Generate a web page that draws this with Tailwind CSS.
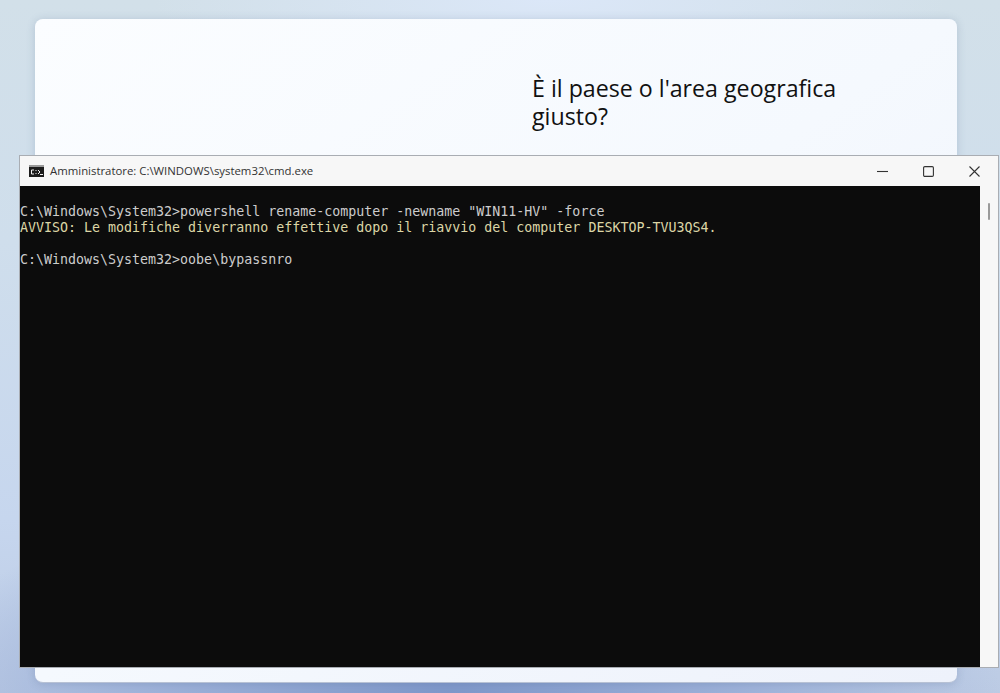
<!DOCTYPE html>
<html lang="en">
<head>
    <meta charset="UTF-8" />
    <title>cmd.exe</title>
    <script src="https://cdn.jsdelivr.net/npm/@tailwindcss/browser@4"></script>
</head>
<body class="relative h-[693px] w-[1000px] overflow-hidden bg-[radial-gradient(ellipse_55%_30%_at_45%_100%,#7f98ca_0%,#9fb3da_55%,transparent_100%),radial-gradient(ellipse_40%_12%_at_55%_0%,#dbe7f8_0%,transparent_100%),linear-gradient(180deg,#d2e0e9_0%,#cfdeec_35%,#c6d6ee_75%,#bccbe4_100%)]">
    <!-- setup card behind the console -->
    <div class="ml-[35px] mt-[19px] h-[664px] w-[922px] rounded-lg border-b border-[#b7c1d4] bg-gradient-to-br from-[#fbfdff] via-[#f5f9fe] to-[#eef2fb] pl-[497px] pt-[55px] shadow-[0_1px_8px_rgba(70,90,130,0.22)]">
        <h1 class="w-[340px] text-[23.2px] leading-[28px] font-medium text-[#111] [font-family:'Open_Sans','Noto_Sans',sans-serif]">È il paese o l'area geografica giusto?</h1>
    </div>

    <!-- console window -->
    <div class="absolute left-[19px] top-[155px] flex h-[513px] w-[980px] flex-col border border-[#a9adb3] bg-[#f7f7f7]">
        <div class="flex h-[30px] shrink-0 items-center pl-[9px] text-[#333]">
            <svg width="15" height="12" viewBox="0 0 15 12" class="mr-[6px]">
                <rect width="15" height="12" fill="#1c1c1c" />
                <rect width="15" height="2" fill="#9a9a9a" />
                <path d="M5 5H2.5v4H5M7 5v1M7 8v1M9 5l2 2-2 2M11 9.5h3" stroke="#f0f0f0" stroke-width="1" fill="none" />
            </svg>
            <span class="text-[11.38px] [font-family:'Open_Sans',sans-serif]">Amministratore: C:\WINDOWS\system32\cmd.exe</span>
            <div class="ml-auto flex items-center gap-[35px] pr-[18px]">
                <svg width="11" height="11" viewBox="0 0 11 11"><path d="M0 5.5h11" stroke="#333" stroke-width="1.1" /></svg>
                <svg width="11" height="11" viewBox="0 0 11 11"><rect x="0.6" y="0.6" width="9.8" height="9.8" rx="1.2" fill="none" stroke="#333" stroke-width="1.1" /></svg>
                <svg width="11" height="11" viewBox="0 0 11 11"><path d="M0.5 0.5l10 10M10.5 0.5l-10 10" stroke="#333" stroke-width="1.1" /></svg>
            </div>
        </div>
        <div class="flex min-h-0 flex-1">
            <div class="w-[960px] bg-[#0c0c0c] pt-[18px] text-[13.31px] leading-[16px] whitespace-pre text-[#cccccc] [font-family:'DejaVu_Sans_Mono','Liberation_Mono',monospace]"><div>C:\Windows\System32&gt;powershell rename-computer -newname "WIN11-HV" -force</div><div class="text-[#dcd6a6]">AVVISO: Le modifiche diverranno effettive dopo il riavvio del computer DESKTOP-TVU3QS4.</div><div>&nbsp;</div><div>C:\Windows\System32&gt;oobe\bypassnro</div></div>
            <div class="flex-1 pl-[8px] pt-[17px]">
                <div class="h-[17px] w-[2px] rounded-full bg-[#9a9a9a]"></div>
            </div>
        </div>
    </div>
</body>
</html>
